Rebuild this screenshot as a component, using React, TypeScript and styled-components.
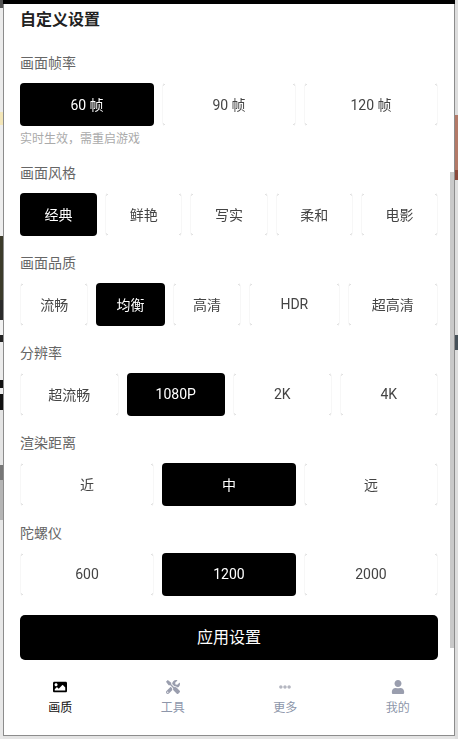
import React from 'react'
import styled, { createGlobalStyle } from 'styled-components'
import { FaImage, FaTools, FaEllipsisH, FaUser } from 'react-icons/fa'

const GlobalStyle = createGlobalStyle`
    html, body {
        margin: 0;
        padding: 0;
        background: #e4e4e4;
    }
    body {
        font-family: Roboto, "Noto Sans CJK SC", sans-serif;
    }
`

const Page = styled.div`
    position: relative;
    width: 458px;
    height: 739px;
    overflow: hidden;
    background: #e4e4e4;
`

const BackStrip = styled.div<{ $side: 'left' | 'right' }>`
    position: absolute;
    top: 0;
    bottom: 0;
    width: 3px;
    ${p => (p.$side === 'left' ? 'left: 0;' : 'right: 0;')}
    background: ${p =>
        p.$side === 'left'
            ? `linear-gradient(to bottom,
                #555 0 8px, #ececec 8px 112px, #f3e6b8 112px 125px, #eeeeee 125px 236px,
                #3c3b2a 236px 300px, #2a2a2a 300px 320px, #f2f2f2 320px 335px, #222 335px 342px,
                #ececec 342px 380px, #111 380px 388px, #eee 388px 394px, #111 394px 410px,
                #e4e4e4 410px 465px, #777 465px 480px, #b5b5b5 480px 520px, #e8e8e8 520px 739px)`
            : `linear-gradient(to bottom,
                #dddddd 0 115px, #b47a68 115px 170px, #8c4a3c 170px 180px, #dedede 180px 335px,
                #47525a 335px 350px, #dddddd 350px 739px)`};
`

const Sheet = styled.div`
    position: relative;
    width: 452px;
    margin-left: 3px;
`

const TopBar = styled.div`
    height: 4px;
    background: #000;
`

const Modal = styled.div`
    position: relative;
    box-sizing: border-box;
    height: 732px;
    display: flex;
    flex-direction: column;
    background: #fff;
    border-left: 1px solid #8c8c8c;
    border-right: 1px solid #8c8c8c;
    border-bottom: 1px solid #8c8c8c;
    overflow: hidden;
`

const ScrollThumb = styled.div`
    position: absolute;
    top: 168px;
    right: 0;
    width: 4px;
    height: 476px;
    background: #c9c9c9;
`

const Content = styled.div`
    padding: 4px 16px 0;
`

const Title = styled.h2`
    margin: 0 0 21px;
    font-size: 16px;
    line-height: 24px;
    font-weight: 700;
    color: #222;
`

const Section = styled.section`
    margin-bottom: 17px;
`

const Label = styled.div`
    font-size: 14px;
    line-height: 20px;
    color: #666;
    margin-bottom: 10px;
`

const Options = styled.div`
    display: flex;
    gap: 8px;
`

const cornerDot = 'radial-gradient(circle, #e0e0e0 0 1px, transparent 1.2px)'

const Option = styled.button<{ $active?: boolean; $grow?: number }>`
    flex: ${p => p.$grow ?? 1} 1 0;
    min-width: 0;
    height: 43px;
    padding: 0 0 2px;
    border-radius: 4px;
    border: 1px solid transparent;
    border-left-color: ${p => (p.$active ? '#000' : '#f7f7f7')};
    border-right-color: ${p => (p.$active ? '#000' : '#f7f7f7')};
    background-color: ${p => (p.$active ? '#000' : '#fff')};
    background-image: ${p =>
        p.$active ? 'none' : `${cornerDot}, ${cornerDot}, ${cornerDot}, ${cornerDot}`};
    background-size: 3px 3px;
    background-repeat: no-repeat;
    background-position: left top, right top, left bottom, right bottom;
    background-origin: border-box;
    color: ${p => (p.$active ? '#fff' : '#444')};
    font-family: inherit;
    font-size: 14px;
    /* keeps the small CJK glyphs free of colour fringes */
    filter: grayscale(1);
`

const Hint = styled.div`
    margin-top: 6px;
    font-size: 12px;
    line-height: 14px;
    color: #aaa;
`

const ApplyButton = styled.button`
    display: block;
    width: 100%;
    height: 45px;
    margin-top: 19px;
    padding: 0 0 3px;
    border: none;
    border-radius: 5px;
    background: #000;
    color: #fff;
    font-family: inherit;
    font-size: 16px;
`

const TabBar = styled.nav`
    display: grid;
    grid-template-columns: repeat(4, 1fr);
    padding-top: 20px;
`

const Tab = styled.div<{ $active?: boolean }>`
    display: flex;
    flex-direction: column;
    align-items: center;
    gap: 6px;
    font-size: 12px;
    line-height: 16px;
    color: ${p => (p.$active ? '#111' : '#8d96aa')};
    svg {
        width: 14px;
        height: 14px;
        color: ${p => (p.$active ? '#000' : '#9a9eae')};
    }
`

const MoreIcon = styled(FaEllipsisH)`
    ${Tab} && {
        width: 12px;
        color: #b4b6c0;
    }
`

const groups = [
    { label: '画面帧率', active: 0, hint: '实时生效，需重启游戏', options: ['60 帧', '90 帧', '120 帧'] },
    { label: '画面风格', active: 0, options: ['经典', '鲜艳', '写实', '柔和', '电影'] },
    { label: '画面品质', active: 1, options: ['流畅', '均衡', '高清', 'HDR', '超高清'], grow: [3, 3, 3, 4, 4] },
    { label: '分辨率', active: 1, options: ['超流畅', '1080P', '2K', '4K'] },
    { label: '渲染距离', active: 1, options: ['近', '中', '远'] },
    { label: '陀螺仪', active: 1, options: ['600', '1200', '2000'] },
]

const tabs = [
    { label: '画质', icon: <FaImage />, active: true },
    { label: '工具', icon: <FaTools /> },
    { label: '更多', icon: <MoreIcon /> },
    { label: '我的', icon: <FaUser /> },
]

const App = () => {
    return (
        <Page>
            <GlobalStyle />
            <BackStrip $side="left" />
            <BackStrip $side="right" />
            <Sheet>
                <TopBar />
                <Modal>
                    <Content>
                        <Title>自定义设置</Title>
                        {groups.map(group => (
                            <Section key={group.label}>
                                <Label>{group.label}</Label>
                                <Options>
                                    {group.options.map((option, i) => (
                                        <Option key={option} $active={i === group.active} $grow={group.grow?.[i]}>
                                            {option}
                                        </Option>
                                    ))}
                                </Options>
                                {group.hint && <Hint>{group.hint}</Hint>}
                            </Section>
                        ))}
                        <ApplyButton>应用设置</ApplyButton>
                    </Content>
                    <TabBar>
                        {tabs.map(tab => (
                            <Tab key={tab.label} $active={tab.active}>
                                {tab.icon}
                                {tab.label}
                            </Tab>
                        ))}
                    </TabBar>
                    <ScrollThumb />
                </Modal>
            </Sheet>
        </Page>
    )
}

export default App
